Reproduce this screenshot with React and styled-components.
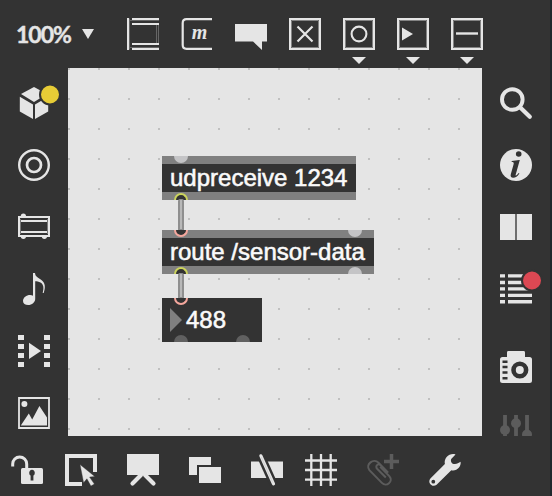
import React from "react";
import styled, { createGlobalStyle } from "styled-components";

const DARK = "#333333";
const LIGHT = "#e5e5e5";
const DIM = "#5c5c5c";

const GlobalStyle = createGlobalStyle`
  * { box-sizing: border-box; }
  body { margin: 0; background: ${DARK}; overflow: hidden; }
`;

const Window = styled.div`
  width: 552px;
  height: 496px;
  display: grid;
  grid-template: 68px 368px 60px / 68px 414px 68px;
  background: ${DARK};
  border-right: 2px solid #1f282d;
`;

const TopBar = styled.header`
  grid-column: 1 / -1;
  display: flex;
  align-items: flex-start;
  gap: 22px;
  padding: 18px 0 0 16px;
`;

const Zoom = styled.div`
  width: 89px;
  height: 32px;
  display: flex;
  align-items: center;
  gap: 10px;
  color: ${LIGHT};
  font: 700 23px/32px Lato, sans-serif;
`;

const ZoomValue = styled.span`
  width: 56px;
  letter-spacing: -1px;
  -webkit-text-stroke: 0.4px ${LIGHT};
`;

const SideBar = styled.nav`
  display: flex;
  flex-direction: column;
  align-items: center;
  gap: 30px;
  padding-top: 19px;
  min-height: 0;
  overflow: hidden;
`;

const BottomBar = styled.footer`
  grid-column: 1 / -1;
  display: flex;
  gap: 30px;
  padding: 18px 0 0 11px;
`;

const Pair = styled.div`
  display: flex;
  gap: 22px;
`;

const IconSlot = styled.svg`
  display: block;
  flex: none;
  width: 32px;
  height: 32px;
  margin-top: ${(p) => p.$before || 0}px;
  overflow: visible;
  fill: none;
  stroke: none;
  color: ${(p) => (p.$dim ? DIM : LIGHT)};
`;

const Caret = styled.svg`
  display: block;
  width: 12px;
  height: 10px;
  fill: ${LIGHT};
`;

const Canvas = styled.main`
  position: relative;
  background-color: ${LIGHT};
  background-image: conic-gradient(from 270deg at 2px 2px, #c0c0c0 90deg, transparent 90deg);
  background-size: 30px 30px;
`;

const Node = styled.div`
  position: absolute;
  left: 94px;
  top: ${(p) => p.$top}px;
  width: ${(p) => p.$width}px;
  height: 44px;
  padding-left: 8px;
  background: ${(p) => (p.$plain ? DARK : `linear-gradient(#808080 8px, ${DARK} 8px, ${DARK} 36px, #808080 36px)`)};
  color: #fafafa;
  font: 24px/44px "Liberation Sans", Arial, sans-serif;
  -webkit-text-stroke: 0.55px #fafafa;
  white-space: pre;
`;

const NumberRow = styled.div`
  display: flex;
  align-items: center;
  gap: 3px;
  height: 44px;
`;

const NumberMark = styled.svg`
  width: 13px;
  height: 24px;
  fill: #808080;
`;

const portColors = {
  idle: "#c4c4c6",
  dim: "#606060",
  out: "#ccd45c",
  in: "#f5a79d",
};

const Port = styled.i`
  position: absolute;
  left: ${(p) => p.$x - 7}px;
  ${(p) => (p.$side === "top" ? "top: 0;" : "bottom: 0;")}
  width: 14px;
  height: 7px;
  border-radius: ${(p) => (p.$side === "top" ? "0 0 7px 7px" : "7px 7px 0 0")};
  background: ${(p) => (p.$linked ? DARK : portColors[p.$kind])};
  border: ${(p) => (p.$linked ? `2px solid ${portColors[p.$kind]}` : "0")};
  ${(p) => (p.$linked ? (p.$side === "top" ? "border-top: 0;" : "border-bottom: 0;") : "")}
`;

const Cord = styled.i`
  position: absolute;
  z-index: 2;
  left: 110px;
  top: ${(p) => p.$top}px;
  width: 6px;
  height: ${(p) => p.$height}px;
  border: solid #8f8f8f;
  border-width: 1px 2px;
  border-radius: 2px 2px 0 0;
  background: #b8b8b8;
`;

const Glyph = styled.text`
  font-family: "Liberation Serif", serif;
  font-style: italic;
  font-weight: 700;
`;

const Icon = ({ children, dim, before }) => (
  <IconSlot viewBox="0 0 32 32" $dim={dim} $before={before}>
    {children}
  </IconSlot>
);

const BoxIcon = ({ menu, children }) => (
  <Icon>
    <path d="M1 1h30v30H1z" stroke="currentColor" strokeWidth="2" />
    <path d="M2.5 2.5h27v27h-27z" stroke="#838383" />
    {children}
    {menu && <path d="M9 39h14l-7 7z" fill="currentColor" />}
  </Icon>
);

const TopIcons = () => (
  <>
    <Icon>
      <path d="M2.5 2.5H32M2.5 29.5H32M2.5 .5v31M29.5 7v18M31.5 7v18" stroke="#666" />
      <path d="M0 0h2v32H0zM5 0h27v2H5zM5 5h27v2H5zM5 25h27v2H5zM5 30h27v2H5z" fill="currentColor" />
    </Icon>
    <Icon>
      <path d="M31 1.1H5.5Q1.7 1.1 1.7 5v22q0 3.8 3.8 3.8H31" stroke="currentColor" strokeWidth="2.2" />
      <Glyph x="10.8" y="21" fontSize="20" fill="currentColor">m</Glyph>
    </Icon>
    <Icon>
      <path d="M0 6h32v17.5h-5V32l-9-8.5H0z" fill="currentColor" />
    </Icon>
    <BoxIcon>
      <path d="M8.5 8.5l15 15M23.5 8.5l-15 15" stroke="currentColor" strokeWidth="2.2" />
    </BoxIcon>
    <BoxIcon menu>
      <circle cx="16" cy="16" r="7.4" stroke="currentColor" strokeWidth="2.1" />
    </BoxIcon>
    <BoxIcon menu>
      <path d="M5 9.5v13L16 16z" fill="currentColor" />
    </BoxIcon>
    <BoxIcon menu>
      <path d="M5 15.5h22" stroke="currentColor" strokeWidth="2.4" />
    </BoxIcon>
  </>
);

const LeftIcons = () => (
  <SideBar>
    <Icon>
      <g fill="currentColor">
        <path d="M16 0l13 7-13 8L3 7z" />
        <path d="M1.8 9.7L15 17.5V32L1.8 24.5z" />
        <path d="M17 17.5l13.2-7.8v14.8L17 32z" />
      </g>
      <circle cx="32" cy="7.5" r="10" fill="#e7cc36" stroke={DARK} strokeWidth="2" />
    </Icon>
    <Icon>
      <circle cx="16" cy="16" r="14.8" stroke="currentColor" strokeWidth="2.4" />
      <circle cx="16" cy="16" r="7" stroke="currentColor" strokeWidth="2.7" />
    </Icon>
    <Icon>
      <path d="M1 6h30v19H1z" stroke="currentColor" strokeWidth="2" />
      <path d="M3 10h26M3 21h26" stroke="currentColor" strokeWidth="2" />
      <path d="M2.5 8v15M29.5 8v15" stroke="#777" />
      <g fill="currentColor">
        <path d="M2.8 5a2.6 2.6 0 015.2 0zM2.8 25.5a2.6 2.4 0 005.2 0zM23.8 25.5a2.6 2.4 0 005.2 0z" />
      </g>
    </Icon>
    <Icon>
      <path d="M15 0h2c.3 4 3.2 4.4 6.7 7.3 3.8 3.1 3.8 7.5 2 12.7h-1c1.3-5.1 1-8.2-2.2-10.4-1.700-1.100-3.800-1.400-5.300-1.400V26c0 3.300-3.300 6-7 6-3.100 0-5.200-1.600-5.200-4.100 0-3.400 3.500-6 7-6 1.200 0 2.200.3 3 .8z" fill="currentColor" />
    </Icon>
    <Icon>
      <g fill="currentColor">
        {[0, 9, 18, 27].map((y) => (
          <path key={y} d={`M0 ${y}h6v5H0zM26 ${y}h6v5h-6z`} />
        ))}
        <path d="M11 7.8V24l12-8z" />
      </g>
    </Icon>
    <Icon>
      <path d="M1 1h30v30H1z" stroke="currentColor" strokeWidth="1.8" />
      <circle cx="6.4" cy="7" r="3" fill="currentColor" />
      <path d="M2.8 28.5l8-12 3.4 6L21.4 9l7.6 11.5v8z" fill="currentColor" />
    </Icon>
  </SideBar>
);

const RightIcons = () => (
  <SideBar>
    <Icon>
      <circle cx="12.3" cy="12.5" r="10.3" stroke="currentColor" strokeWidth="3.9" />
      <path d="M20 20.2l9.8 9.6" stroke="currentColor" strokeWidth="4.2" strokeLinecap="round" />
    </Icon>
    <Icon>
      <circle cx="16" cy="16" r="16" fill="currentColor" />
      <circle cx="18.7" cy="5" r="2.8" fill={DARK} />
      <path d="M11.8 12.1l7.4-1.2h.6l-4.2 15c-.2.9.7.8 1.3.2l1.8-2.1.7.6c-2 3-3.8 4.2-6.2 4.2-2.2 0-3-1.2-2.4-3.5l2.8-10.1c.5-1.9-.1-2.2-2-2.2z" fill={DARK} />
    </Icon>
    <Icon>
      <path d="M0 3h15v26H0zM17 3h15v26H17z" fill="currentColor" />
      <path d="M16 3v26" stroke="#6e6e6e" strokeWidth="2" />
    </Icon>
    <Icon>
      <g fill="currentColor">
        {[1.2, 7.8, 14.2, 20.7, 27].map((y) => (
          <path key={y} d={`M0 ${y}h5v3.4H0zM8 ${y}h24v3.4H8z`} />
        ))}
      </g>
      <circle cx="32" cy="7.5" r="10" fill="#dc4853" stroke={DARK} strokeWidth="2" />
    </Icon>
    <Icon before={16}>
      <path d="M7 6V1.4Q7 0 8.4 0h15.2Q25 0 25 1.4V6h4.5Q32 6 32 8.5v21q0 2.5-2.5 2.5h-27Q0 32 0 29.5v-21Q0 6 2.5 6z" fill="currentColor" />
      <circle cx="19.8" cy="19" r="6.3" stroke={DARK} strokeWidth="4.6" />
      <path d="M2.5 10.7h5M2.5 16h5M2.5 21.5h5M2.5 27.2h5" stroke={DARK} strokeWidth="2.4" />
    </Icon>
    <Icon dim>
      <path d="M5 0v28M16 0v28M27 0v28" stroke="currentColor" strokeWidth="3.8" />
      <g fill="currentColor">
        <circle cx="5" cy="17" r="5" />
        <circle cx="16" cy="10.2" r="5" />
        <circle cx="27" cy="21.5" r="5" />
      </g>
      <path d="M0 0h32v2H0z" fill={DARK} />
    </Icon>
  </SideBar>
);

const BottomIcons = () => (
  <BottomBar>
    <Pair>
      <Icon>
        <path d="M1.7 12.5V10a7 7 0 0114 0v5" stroke="currentColor" strokeWidth="3" />
        <rect x="10" y="14" width="22" height="16" rx="1.5" fill="currentColor" />
        <path d="M18.300 19.400a2.800 2.800 0 115.400 0c0 1-.6 1.700-1.300 2.100v5h-2.800v-5c-.7-.4-1.300-1.100-1.300-2.100z" fill={DARK} />
      </Icon>
      <Icon>
        <path d="M30 18V2H2v28h15" stroke="currentColor" strokeWidth="4" />
        <path d="M15 10.5l14.8 12-5.2.6 4.8 7-3.5 2-4-7.3-3.3 3.9z" fill="currentColor" stroke={DARK} strokeWidth=".4" />
      </Icon>
    </Pair>
    <Icon>
      <path d="M0 0h32v21H0z" fill="currentColor" />
      <path d="M14 21l-8.500 8.500M18 21l8.500 8.500" stroke="currentColor" strokeWidth="4.2" strokeLinecap="round" />
    </Icon>
    <Icon>
      <path d="M0 3h22v8H8v10H0z" fill="currentColor" />
      <path d="M10 13h22v16H10z" fill="currentColor" />
    </Icon>
    <Pair>
      <Icon>
        <path d="M0 7.5h32V24H0z" fill="currentColor" />
        <path d="M9.700 1.500L22.500 30" stroke={DARK} strokeWidth="8" />
        <path d="M9.900 1.800l12.600 28" stroke="currentColor" strokeWidth="3.200" strokeLinecap="round" />
        <path d="M10.200 3l11.500 25.500" stroke="#bcbcbc" strokeWidth=".5" />
      </Icon>
      <Icon>
        <path d="M0 6.5h32M0 16h32M0 25.7h32M6.3 0v32M16 0v32M25.7 0v32" stroke="currentColor" strokeWidth="2.3" />
      </Icon>
    </Pair>
    <Icon dim>
      <path d="M20.800 18.500l-7.200-7.300c-2.400-2.400-5.900 1.100-3.500 3.500l8.700 8.800M21.200 18.600l-9.700-10C6.600 3.900-2 10.200 2.400 16.100l12.500 12.800c4.500 4.600 11.800-1.600 7.600-6.600L13.200 12.700" stroke="currentColor" strokeWidth="2" />
      <path d="M24.5 0v15M17 7.5h15" stroke="currentColor" strokeWidth="3.5" />
    </Icon>
    <Icon>
      <path fillRule="evenodd" d="M26.500.4l-4.300 4.500c-1 2.600.8 5.400 3.800 5.200 2-.2 3.800-1.300 5.600-2.400.7 5-3.700 9.700-9.300 8.500L7.600 30.800c-4.500 3.300-9.600-2.200-6.200-6.300L15.900 10C14.500 4.200 20.600-1.500 26.500.4zM4.300 25.800a1.900 1.900 0 100 3.800 1.900 1.900 0 000-3.800z" fill="currentColor" />
    </Icon>
  </BottomBar>
);

export default function App() {
  return (
    <>
      <GlobalStyle />
      <Window>
        <TopBar>
          <Zoom>
            <ZoomValue>100%</ZoomValue>
            <Caret viewBox="0 0 12 10"><path d="M0 0h12L6 10z" /></Caret>
          </Zoom>
          <TopIcons />
        </TopBar>
        <LeftIcons />
        <Canvas>
          <Node $top={88} $width={194}>
            udpreceive 1234
            <Port $x={19} $side="top" $kind="idle" />
            <Port $x={19} $side="bottom" $kind="out" $linked />
          </Node>
          <Node $top={162} $width={212}>
            route /sensor-data
            <Port $x={19} $side="top" $kind="in" $linked />
            <Port $x={193} $side="top" $kind="idle" />
            <Port $x={19} $side="bottom" $kind="out" $linked />
            <Port $x={193} $side="bottom" $kind="idle" />
          </Node>
          <Node $top={230} $width={100} $plain>
            <NumberRow>
              <NumberMark viewBox="0 0 13 24"><path d="M0 0v24l12-12z" /></NumberMark>
              488
            </NumberRow>
            <Port $x={19} $side="top" $kind="in" $linked />
            <Port $x={19} $side="bottom" $kind="dim" />
            <Port $x={81} $side="bottom" $kind="dim" />
          </Node>
          <Cord $top={131} $height={31} />
          <Cord $top={205} $height={25} />
        </Canvas>
        <RightIcons />
        <BottomIcons />
      </Window>
    </>
  );
}
